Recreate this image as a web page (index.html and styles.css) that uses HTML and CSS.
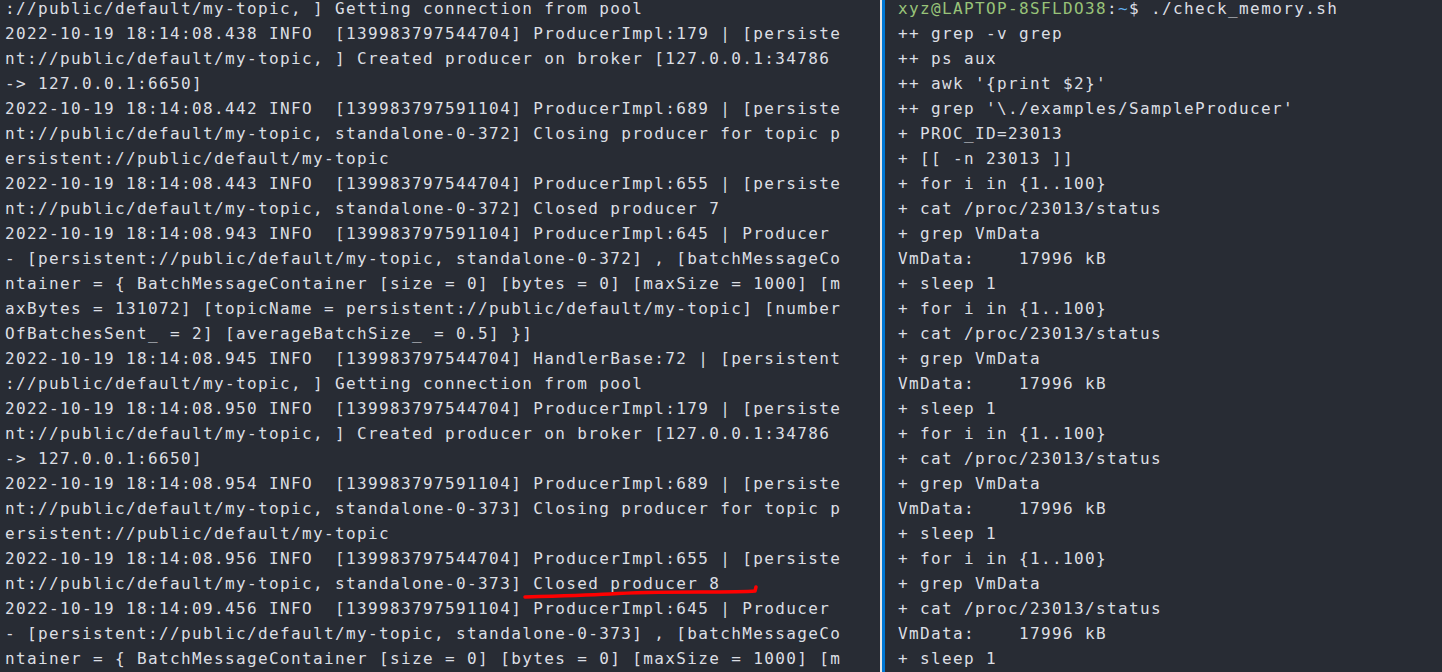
FILE: index.html
```html
<!DOCTYPE html>
<html>
<head>
<meta charset="utf-8">
<link rel="stylesheet" href="styles.css">
</head>
<body>
<div class="screen">
  <div class="pane left">
<pre class="term">://public/default/my-topic, ] Getting connection from pool
2022-10-19 18:14:08.438 INFO  [139983797544704] ProducerImpl:179 | [persiste
nt://public/default/my-topic, ] Created producer on broker [127.0.0.1:34786
-&gt; 127.0.0.1:6650]
2022-10-19 18:14:08.442 INFO  [139983797591104] ProducerImpl:689 | [persiste
nt://public/default/my-topic, standalone-0-372] Closing producer for topic p
ersistent://public/default/my-topic
2022-10-19 18:14:08.443 INFO  [139983797544704] ProducerImpl:655 | [persiste
nt://public/default/my-topic, standalone-0-372] Closed producer 7
2022-10-19 18:14:08.943 INFO  [139983797591104] ProducerImpl:645 | Producer
- [persistent://public/default/my-topic, standalone-0-372] , [batchMessageCo
ntainer = { BatchMessageContainer [size = 0] [bytes = 0] [maxSize = 1000] [m
axBytes = 131072] [topicName = persistent://public/default/my-topic] [number
OfBatchesSent_ = 2] [averageBatchSize_ = 0.5] }]
2022-10-19 18:14:08.945 INFO  [139983797544704] HandlerBase:72 | [persistent
://public/default/my-topic, ] Getting connection from pool
2022-10-19 18:14:08.950 INFO  [139983797544704] ProducerImpl:179 | [persiste
nt://public/default/my-topic, ] Created producer on broker [127.0.0.1:34786
-&gt; 127.0.0.1:6650]
2022-10-19 18:14:08.954 INFO  [139983797591104] ProducerImpl:689 | [persiste
nt://public/default/my-topic, standalone-0-373] Closing producer for topic p
ersistent://public/default/my-topic
2022-10-19 18:14:08.956 INFO  [139983797544704] ProducerImpl:655 | [persiste
nt://public/default/my-topic, standalone-0-373] Closed producer 8
2022-10-19 18:14:09.456 INFO  [139983797591104] ProducerImpl:645 | Producer
- [persistent://public/default/my-topic, standalone-0-373] , [batchMessageCo
ntainer = { BatchMessageContainer [size = 0] [bytes = 0] [maxSize = 1000] [m</pre>
  </div>
  <div class="divider"><span class="edge"></span><span class="accent"></span></div>
  <div class="pane right">
<pre class="term"><span class="g">xyz@LAPTOP-8SFLDO38</span>:<span class="b">~</span>$ ./check_memory.sh
++ grep -v grep
++ ps aux
++ awk '{print $2}'
++ grep '\./examples/SampleProducer'
+ PROC_ID=23013
+ [[ -n 23013 ]]
+ for i in {1..100}
+ cat /proc/23013/status
+ grep VmData
VmData:    17996 kB
+ sleep 1
+ for i in {1..100}
+ cat /proc/23013/status
+ grep VmData
VmData:    17996 kB
+ sleep 1
+ for i in {1..100}
+ cat /proc/23013/status
+ grep VmData
VmData:    17996 kB
+ sleep 1
+ for i in {1..100}
+ grep VmData
+ cat /proc/23013/status
VmData:    17996 kB
+ sleep 1
<span class="cursor"></span></pre>
  </div>
  <svg class="scribble" width="1442" height="672" viewBox="0 0 1442 672">
    <path d="M525 597 C 560 596 590 595 610 594 C 640 592 660 592 700 592 C 730 592 745 592 755 591 L 756 587" fill="none" stroke="#ff0000" stroke-width="3.5" stroke-linecap="round" stroke-linejoin="round"/>
  </svg>
</div>
</body>
</html>
```

FILE: styles.css
```css
html, body {
  margin: 0;
  padding: 0;
  background: #282c34;
}
.screen {
  position: relative;
  width: 1442px;
  height: 672px;
  overflow: hidden;
  display: flex;
  background: #282c34;
}
.pane {
  overflow: hidden;
  height: 672px;
}
.left {
  width: 880px;
  flex: none;
  padding-left: 5px;
  box-sizing: border-box;
}
.right {
  flex: 1;
  padding-left: 13px;
}
.divider {
  display: flex;
  flex: none;
  height: 672px;
}
.edge {
  width: 2px;
  background: #e6e6e6;
}
.accent {
  width: 3px;
  background: #0078d4;
}
.term {
  margin: -4px 0 0 0;
  font-family: "DejaVu Sans Mono", "Liberation Mono", monospace;
  font-size: 16px;
  letter-spacing: 1.37px;
  line-height: 25px;
  color: #dcdfe4;
  white-space: pre;
}
.g { color: #98c379; }
.b { color: #61afef; }
.cursor {
  display: inline-block;
  width: 1px;
  height: 4px;
  background: #dcdfe4;
  vertical-align: top;
  margin-top: 4px;
}
.scribble {
  position: absolute;
  left: 0;
  top: 0;
  pointer-events: none;
}
```
